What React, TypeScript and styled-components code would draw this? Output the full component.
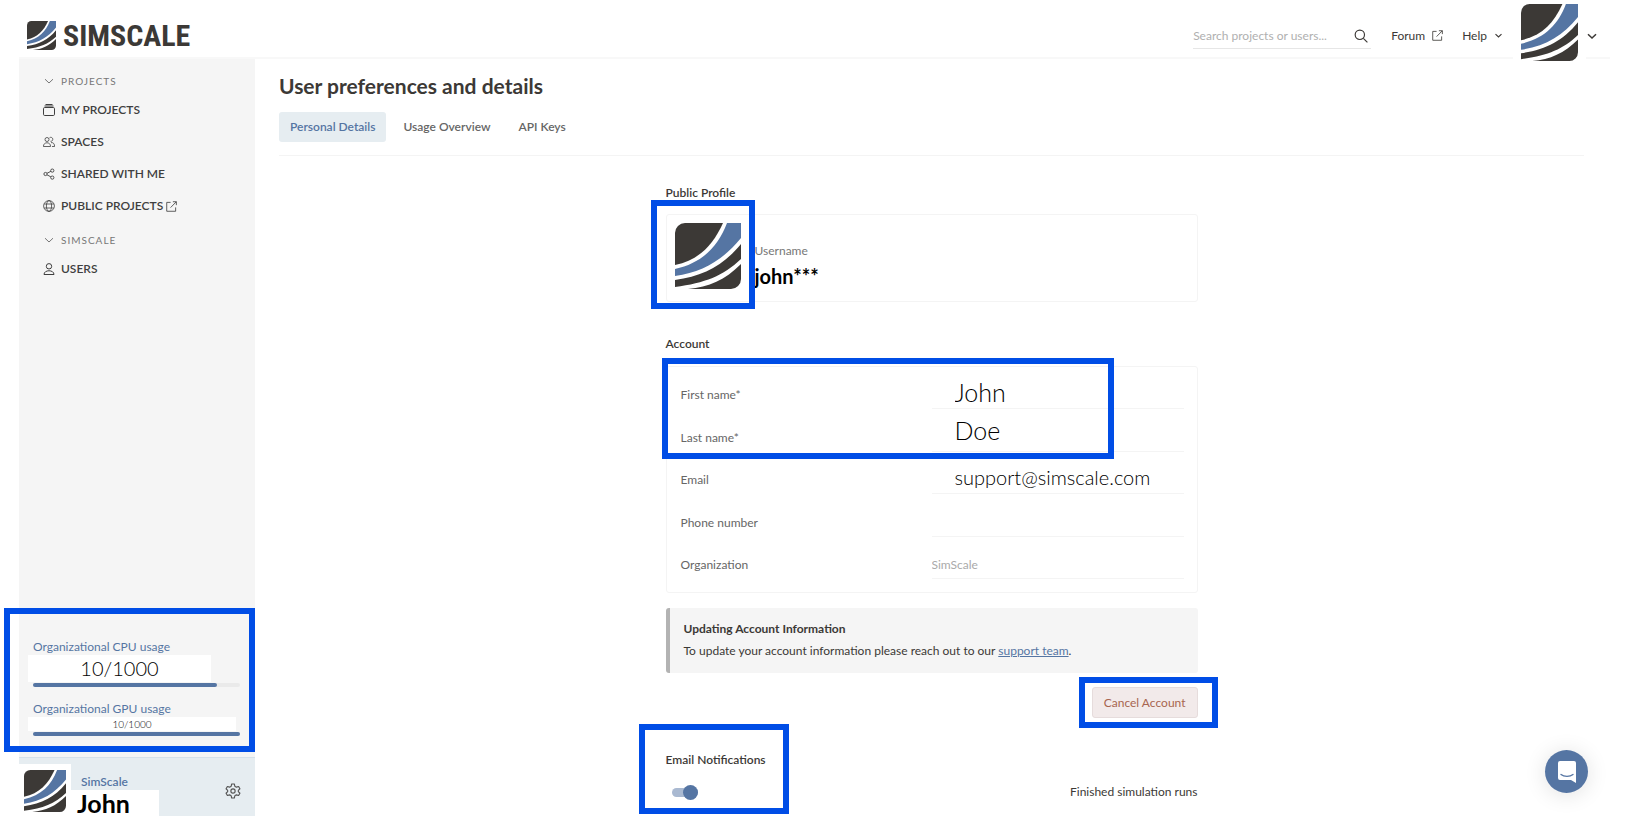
import React from 'react';
import styled, { createGlobalStyle } from 'styled-components';

const blue = '#5575a3';
const ink = '#3c3936';
const rule = '#f4f4f4';

const GlobalStyle = createGlobalStyle`
  *, *::before, *::after { box-sizing: border-box; }
  body { margin: 0; background: #fff; color: ${ink}; font: 12px/16px Lato, sans-serif; }
  button, input { font: inherit; color: inherit; margin: 0; padding: 0; border: 0; background: none; }
  a { color: inherit; text-decoration: none; }
  h1, h2, h3, p, ul { margin: 0; padding: 0; list-style: none; }
`;

const Page = styled.div`
  min-height: 100vh;
  display: flex;
  flex-direction: column;
  padding: 0 24px 4px 19px;
`;

const Header = styled.header`
  height: 59px;
  flex: none;
  display: flex;
  align-items: center;
  border-bottom: 2px solid #f8f8f8;
  padding: 14px 0 0 8px;
`;

const Brand = styled.a`
  display: flex;
  align-items: center;
  gap: 7px;
  margin-right: auto;
`;

const Wordmark = styled.span`
  font: 700 30px/28px 'Roboto Condensed', 'Liberation Sans Narrow', sans-serif;
  color: ${ink};
`;

const Search = styled.form`
  width: 178px;
  height: 27px;
  display: flex;
  align-items: center;
  border-bottom: 1px solid #e6e6e6;
  margin-right: 20px;
  padding: 2px 3px 0 0;
  input { flex: 1; min-width: 0; outline: 0; }
  input::placeholder { color: #b0b0b0; opacity: 1; }
  button { display: flex; }
`;

const TopLink = styled.a`
  display: flex;
  align-items: center;
  gap: 7px;
  margin-right: 19px;
`;

const AccountMenu = styled.button`
  display: flex;
  align-items: center;
  margin-left: -9px;
  padding-right: 12px;
`;

const AvatarBox = styled.span`
  position: relative;
  display: flex;
  margin: -14px 0 -8px;
  padding: 0 8px;
  background: #fff;
`;

const Body = styled.div`
  flex: 1;
  display: flex;
`;

const Sidebar = styled.nav`
  width: 236px;
  flex: none;
  display: flex;
  flex-direction: column;
  background: #f5f5f5;
`;

const Group = styled.div`
  padding: 13px 24px 0;
  & + & { padding-top: 9px; }
`;

const GroupTitle = styled.button`
  display: flex;
  align-items: center;
  gap: 6px;
  height: 18px;
  font-size: 10px;
  letter-spacing: 1px;
  color: #777;
  svg { width: 12px; }
`;

const NavItem = styled.a`
  display: flex;
  align-items: center;
  gap: 6px;
  height: 32px;
  font-weight: 600;
  color: #3f3f3f;
  svg:last-child:not(:first-child) { margin-left: -3px; }
`;

const NavList = styled.ul`
  padding-top: 4px;
`;

const Usage = styled.section`
  position: relative;
  margin-top: auto;
  padding: 31px 15px 21px 14px;
  color: ${blue};
`;

const UsageBlock = styled.div`
  & + & { margin-top: 14px; }
`;

const UsageLabel = styled.p`
  font-size: 12px;
`;

const UsageValue = styled.p<{ $large?: boolean }>`
  margin: 0 ${p => (p.$large ? 29 : 4)}px 0 -5px;
  height: ${p => (p.$large ? 27 : 14)}px;
  font-size: ${p => (p.$large ? 20 : 10)}px;
  line-height: ${p => (p.$large ? 27 : 14)}px;
  font-weight: 300;
  text-align: center;
  color: #000;
  background: #fff;
`;

const Track = styled.div`
  height: 4px;
  margin-top: 1px;
  border-radius: 2px;
  background: #eaeaea;
`;

const Fill = styled.div`
  height: 100%;
  border-radius: 2px;
  background: ${blue};
`;

const UserBar = styled.div`
  height: 59px;
  display: flex;
  align-items: flex-end;
  background: #e6edf1;
  border-top: 1px solid #d6e1ea;
`;

const UserLogo = styled.div`
  display: flex;
  height: 52px;
  padding: 6px 5px 0;
  background: #fff;
`;

const UserText = styled.div`
  width: 88px;
  font-weight: 600;
  p { padding-left: 10px; color: ${blue}; }
  strong { display: block; padding-left: 6px; font-size: 25px; font-weight: 700; line-height: 26px; color: #000; background: #fff; }
`;

const IconButton = styled.button`
  display: flex;
  margin: 0 14px 17px auto;
`;

const Main = styled.main`
  flex: 1;
  padding: 12px 26px 0 24px;
`;

const Title = styled.h1`
  font-size: 21px;
  line-height: 30px;
  font-weight: 700;
`;

const Tabs = styled.div`
  display: flex;
  gap: 6px;
  padding: 11px 0 13px;
  border-bottom: 1px solid ${rule};
`;

const Tab = styled.button<{ $active?: boolean }>`
  height: 30px;
  padding: 0 11px;
  border-radius: 3px;
  font-weight: 600;
  color: ${p => (p.$active ? blue : '#666')};
  background: ${p => (p.$active ? '#e6edf1' : 'none')};
`;

const Column = styled.div`
  width: 100%;
  max-width: 532px;
  margin: 0 auto;
  padding: 29px 0 0;
`;

const SectionTitle = styled.h2`
  font-size: 12px;
  line-height: 16px;
  font-weight: 600;
`;

const Card = styled.div`
  position: relative;
  border: 1px solid ${rule};
  border-radius: 3px;
`;

const ProfileCard = styled(Card)`
  display: flex;
  align-items: center;
  height: 88px;
  margin: 13px 0 34px;
  padding: 0 0 4px 8px;
`;

const Username = styled.div`
  padding: 24px 0 0 14px;
  color: #777;
  strong { display: block; font-size: 20px; line-height: 34px; color: #000; }
`;

const AccountCard = styled(Card)`
  display: flex;
  flex-direction: column;
  min-height: 227px;
  margin: 14px 0 15px;
  padding: 0 13px 13px 14px;
`;

const Field = styled.label<{ $size?: number; $lift?: number }>`
  flex: 1;
  display: flex;
  align-items: flex-end;
  justify-content: space-between;
  line-height: 28px;
  color: #666;
  input {
    width: 252px;
    height: 34px;
    padding: ${p => (p.$size ? 0 : 5)}px 0 ${p => p.$lift || 0}px ${p => (p.$size ? 23 : 0)}px;
    border-bottom: 1px solid ${rule};
    outline: 0;
    font-size: ${p => p.$size || 12}px;
    font-weight: ${p => (p.$size ? 300 : 400)};
    color: ${p => (p.$size ? '#000' : '#aaa')};
  }
`;

const Notice = styled.aside`
  height: 65px;
  padding: 12px 14px;
  border-left: 4px solid #b3b3b3;
  border-radius: 3px;
  background: #f5f5f5;
  h3 { font-size: 12px; line-height: 18px; font-weight: 700; }
  p { line-height: 26px; }
  a { color: ${blue}; text-decoration: underline; }
`;

const Actions = styled.div`
  display: flex;
  justify-content: flex-end;
  padding: 14px 0 34px;
`;

const ButtonWrap = styled.div`
  position: relative;
`;

const DangerButton = styled.button`
  height: 31px;
  padding: 0 11px;
  border: 1px solid #e6dcdc;
  border-radius: 3px;
  background: #f2eaea;
  color: #a8654f;
`;

const Notifications = styled.section`
  position: relative;
`;

const SwitchRow = styled.label`
  display: flex;
  align-items: center;
  justify-content: space-between;
  margin-top: 16px;
  padding-left: 6px;
`;

const Switch = styled.input`
  appearance: none;
  position: relative;
  width: 26px;
  height: 9px;
  border-radius: 5px;
  background: #a9b9d1;
  &::after {
    content: '';
    position: absolute;
    top: -3px;
    right: 0;
    width: 15px;
    height: 15px;
    border-radius: 50%;
    background: ${blue};
  }
`;

const Highlight = styled.div<{ $inset: string }>`
  position: absolute;
  inset: ${p => p.$inset};
  border: 6px solid #004de6;
  pointer-events: none;
`;

const Chat = styled.button`
  position: fixed;
  right: 46px;
  bottom: 27px;
  width: 43px;
  height: 43px;
  display: flex;
  align-items: center;
  justify-content: center;
  border-radius: 50%;
  background: ${blue};
  box-shadow: 0 2px 22px rgba(0, 0, 0, 0.12);
`;

const Logo = ({ size }: { size: number }) => (
  <svg width={size} height={size} viewBox="0 0 66 66" aria-hidden="true">
    <path fill={ink} d="M10 0H48C38 22 24 37 0 42V10A10 10 0 0 1 10 0Z" />
    <path fill={blue} d="M52 0H66V15C48 37 28 49 0 53V46C27 40 43 24 52 0Z" />
    <path fill={ink} d="M66 21V36C48 53 30 60 0 64V57C28 53 48 43 66 21Z" />
    <path fill={ink} d="M66 41V56A10 10 0 0 1 56 66H13C34 64 50 57 66 41Z" />
  </svg>
);

const Icon = ({ size = 12, children, w = 1 }: { size?: number; children: React.ReactNode; w?: number }) => (
  <svg width={size} height={size} viewBox="0 0 12 12" fill="none" stroke="currentColor" strokeWidth={w} aria-hidden="true">
    {children}
  </svg>
);

const Chevron = ({ size = 12, w = 1 }: { size?: number; w?: number }) => <Icon size={size} w={w}><path d="M2 4.2L6 8L10 4.2" /></Icon>;
const External = ({ size = 11 }: { size?: number }) => (
  <Icon size={size} w={0.9}><path d="M5 1.5H.8V11.2H10.5V7M7.5.8H11.3V4.5M11.3.8L5 7.2" /></Icon>
);
const Folder = () => <Icon><rect x=".5" y="3.5" width="11" height="8" rx="1.2" /><path d="M1.5 2H10.5M2.5.5H9.5" /></Icon>;
const People = () => (
  <Icon w={0.8}>
    <circle cx="4" cy="3.5" r="2" /><path d="M6.5 1.8A2 2 0 1 1 7.5 5.3M.4 10.5C.4 5.5 7.6 5.5 7.6 10.5ZM8 6.6C10.5 6.3 11.6 8 11.6 10.5H9" />
  </Icon>
);
const Share = () => (
  <Icon w={0.9}><circle cx="2.5" cy="6" r="1.6" /><circle cx="9.3" cy="2.6" r="1.6" /><circle cx="9.3" cy="9.6" r="1.6" /><path d="M4 5.3L7.9 3.3M4 6.8L7.9 8.9" /></Icon>
);
const Globe = () => (
  <Icon w={0.8}><circle cx="6" cy="6" r="5.4" /><ellipse cx="6" cy="6" rx="2.6" ry="5.4" /><path d="M1.2 4H10.8M1.2 8H10.8" /></Icon>
);
const Person = () => <Icon><circle cx="6" cy="3.3" r="2.7" /><path d="M1 11.5C1 6.5 11 6.5 11 11.5Z" /></Icon>;
const Glass = () => <Icon size={14}><circle cx="5" cy="5" r="4" /><path d="M8 8L11.5 11.5" /></Icon>;
const Gear = () => (
  <svg width="16" height="16" viewBox="0 0 24 24" fill="none" stroke="#555" strokeWidth="1.7" strokeLinejoin="round" aria-hidden="true">
    <circle cx="12" cy="12" r="3.2" />
    <path d="M10 1.5H14L14.8 5L17 6.2L20.4 5.2L22.4 8.6L20 11V13L22.4 15.4L20.4 18.8L17 17.8L14.8 19L14 22.5H10L9.2 19L7 17.8L3.6 18.8L1.6 15.4L4 13V11L1.6 8.6L3.6 5.2L7 6.2L9.2 5Z" />
  </svg>
);

export default function App() {
  return (
    <>
      <GlobalStyle />
      <Page>
        <Header>
          <Brand href="#" aria-label="SimScale home">
            <Logo size={29} />
            <Wordmark>SIMSCALE</Wordmark>
          </Brand>
          <Search>
            <input aria-label="Search" placeholder="Search projects or users..." />
            <button type="button" aria-label="Search"><Glass /></button>
          </Search>
          <TopLink href="#">Forum <External /></TopLink>
          <TopLink href="#">Help <Chevron size={9} w={1.5} /></TopLink>
          <AccountMenu aria-label="Account menu">
            <AvatarBox><Logo size={57} /></AvatarBox>
            <Chevron w={1.5} />
          </AccountMenu>
        </Header>
        <Body>
          <Sidebar>
            <Group>
              <GroupTitle><Chevron />PROJECTS</GroupTitle>
              <NavList>
                <li><NavItem href="#"><Folder />MY PROJECTS</NavItem></li>
                <li><NavItem href="#"><People />SPACES</NavItem></li>
                <li><NavItem href="#"><Share />SHARED WITH ME</NavItem></li>
                <li><NavItem href="#"><Globe />PUBLIC PROJECTS<External /></NavItem></li>
              </NavList>
            </Group>
            <Group>
              <GroupTitle><Chevron />SIMSCALE</GroupTitle>
              <NavList>
                <li><NavItem href="#"><Person />USERS</NavItem></li>
              </NavList>
            </Group>
            <Usage>
              <UsageBlock>
                <UsageLabel>Organizational CPU usage</UsageLabel>
                <UsageValue $large>10/1000</UsageValue>
                <Track><Fill style={{ width: '89%' }} /></Track>
              </UsageBlock>
              <UsageBlock>
                <UsageLabel>Organizational GPU usage</UsageLabel>
                <UsageValue>10/1000</UsageValue>
                <Track><Fill style={{ width: '100%' }} /></Track>
              </UsageBlock>
              <Highlight $inset="0 0 5px -15px" />
            </Usage>
            <UserBar>
              <UserLogo><Logo size={42} /></UserLogo>
              <UserText><p>SimScale</p><strong>John</strong></UserText>
              <IconButton aria-label="Settings"><Gear /></IconButton>
            </UserBar>
          </Sidebar>
          <Main>
            <Title>User preferences and details</Title>
            <Tabs role="tablist">
              <Tab role="tab" aria-selected $active>Personal Details</Tab>
              <Tab role="tab">Usage Overview</Tab>
              <Tab role="tab">API Keys</Tab>
            </Tabs>
            <Column>
              <SectionTitle>Public Profile</SectionTitle>
              <ProfileCard>
                <Logo size={66} />
                <Username>Username<strong>john***</strong></Username>
                <Highlight $inset="-15px 442px -8px -16px" />
              </ProfileCard>
              <SectionTitle>Account</SectionTitle>
              <AccountCard>
                <Field $size={25}>First name*<input defaultValue="John" /></Field>
                <Field $size={25} $lift={8}>Last name*<input defaultValue="Doe" /></Field>
                <Field $size={20}>Email<input type="email" defaultValue="support@simscale.com" /></Field>
                <Field>Phone number<input type="tel" /></Field>
                <Field>Organization<input defaultValue="SimScale" /></Field>
                <Highlight $inset="-9px 83px 133px -5px" />
              </AccountCard>
              <Notice>
                <h3>Updating Account Information</h3>
                <p>To update your account information please reach out to our <a href="#">support team</a>.</p>
              </Notice>
              <Actions>
                <ButtonWrap>
                  <DangerButton>Cancel Account</DangerButton>
                  <Highlight $inset="-10px -20px -10px -13px" />
                </ButtonWrap>
              </Actions>
              <Notifications>
                <SectionTitle>Email Notifications</SectionTitle>
                <SwitchRow><Switch type="checkbox" role="switch" defaultChecked />Finished simulation runs</SwitchRow>
                <Highlight $inset="-28px 409px -14px -27px" />
              </Notifications>
            </Column>
          </Main>
        </Body>
        <Chat aria-label="Open chat">
          <svg width="20" height="22" viewBox="0 0 20 22" aria-hidden="true">
            <path fill="#fff" d="M3 0H17A2 2 0 0 1 19 2V22L14 19H3A2 2 0 0 1 1 17V2A2 2 0 0 1 3 0Z" />
            <path fill="none" stroke={blue} strokeWidth="1.3" strokeLinecap="round" d="M4 13.5C7 16 13 16 16 13.5" />
          </svg>
        </Chat>
      </Page>
    </>
  );
}
